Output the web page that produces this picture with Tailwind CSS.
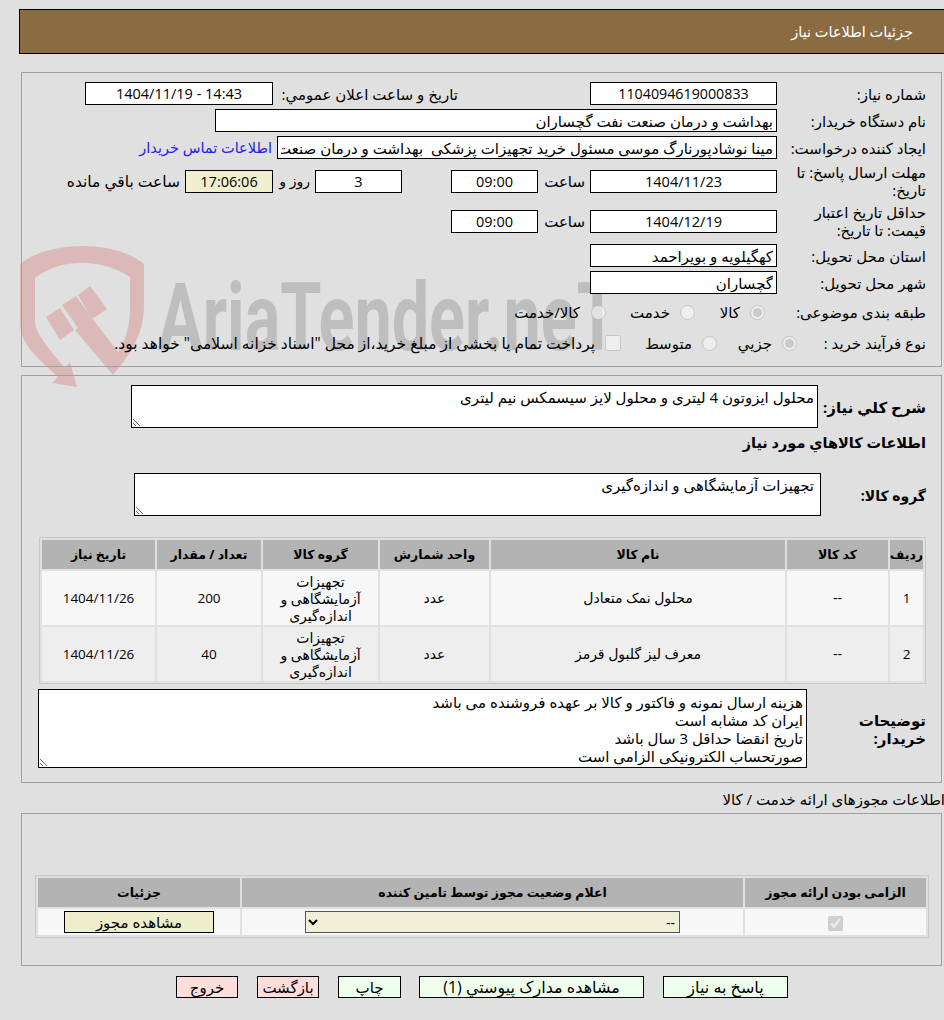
<!DOCTYPE html>
<html lang="fa" dir="rtl">
<head>
    <meta charset="UTF-8">
    <title>جزئیات اطلاعات نیاز</title>
    <script src="https://cdn.jsdelivr.net/npm/@tailwindcss/browser@4"></script>
</head>
<body class="relative bg-[#e0e0e0] text-black text-[15px] leading-[18px] font-['Open_Sans','DejaVu_Sans',sans-serif] w-[944px] h-[1020px] overflow-hidden">

    <!-- watermark -->
    <svg class="absolute left-0 top-0 pointer-events-none" width="944" height="1020" viewBox="0 0 944 1020">
        <path fill="#dbb9b9" d="M20,264 C50,240 115,240 144,264 L144,305 C144,335 130,355 113,375 L75,330 L92,318 L118,352 C126,340 130,325 130,307 L130,277 C100,258 62,258 35,278 L35,323 C36,335 52,352 65,368 L70,362 L77,387 L52,383 L58,377 C40,360 20,345 20,323 Z"/>
        <path fill="#dbb9b9" d="M46,317 L60,308 L74,330 L60,340 Z M62,305 L76,296 L92,318 L78,328 Z M78,295 L90,286 L107,309 L92,319 Z"/>
        <text x="158" y="350" font-family="Roboto" font-weight="700" font-size="94" fill="#bebebe" direction="ltr" textLength="460" lengthAdjust="spacingAndGlyphs">AriaTender.neT</text>
    </svg>

    <div class="relative">
        <!-- title bar -->
        <div class="h-[45px] ml-[19px] mt-[9px] absolute top-0 left-0 right-0 bg-[#8b6c42] border border-black border-r-0 flex items-center pr-[31px] text-white text-[14.5px]">جزئیات اطلاعات نیاز</div>

        <!-- main info -->
        <section class="absolute left-[21px] top-[72px] w-[921px] h-[295px] border border-[#a0a0a0] pt-[9px] pr-[15px]">
            <div class="flex items-center h-[23px]">
                <label class="w-[149px]">شماره نیاز:</label>
                <input readonly value="1104094619000833" class="w-[187px] h-[23px] bg-white border border-black text-center text-[14.25px] outline-none">
                <label class="w-[185px] ms-[132px]">تاریخ و ساعت اعلان عمومي:</label>
                <input readonly dir="ltr" value="1404/11/19 - 14:43" class="w-[188px] h-[23px] bg-white border border-black text-center text-[14.5px] outline-none">
            </div>
            <div class="flex items-center h-[23px] mt-[4px]">
                <label class="w-[149px]">نام دستگاه خریدار:</label>
                <input readonly value="بهداشت و درمان صنعت نفت گچساران" class="w-[562px] h-[23px] bg-white border border-black px-[3px] outline-none">
            </div>
            <div class="flex items-center h-[23px] mt-[4px]">
                <label class="w-[149px]">ایجاد کننده درخواست:</label>
                <input readonly value="مینا نوشادپورنارگ موسی مسئول خرید تجهیزات پزشکی  بهداشت و درمان صنعت نفت گچساران" class="w-[500px] h-[23px] bg-white border border-black px-[3px] outline-none">
                <a class="ms-[5px] text-[#2222ee] text-[14.5px]">اطلاعات تماس خریدار</a>
            </div>
            <div class="flex items-center h-[36px] mt-[4px]">
                <label class="w-[149px]">مهلت ارسال پاسخ: تا تاریخ:</label>
                <input readonly value="1404/11/23" class="w-[187px] h-[23px] bg-white border border-black text-center text-[14.5px] outline-none">
                <span class="w-[47px] ms-[5px]">ساعت</span>
                <input readonly value="09:00" class="w-[87px] h-[23px] bg-white border border-black text-center text-[14.5px] outline-none">
                <input readonly value="3" class="w-[87px] h-[23px] ms-[49px] bg-white border border-black text-center text-[14.5px] outline-none">
                <span class="w-[37px] ms-[5px] text-[14px]">روز و</span>
                <input readonly value="17:06:06" class="w-[88px] h-[23px] bg-[#f0f0d0] border border-black text-center text-[14.5px] outline-none">
                <span class="ms-[5px] text-[15.5px]">ساعت باقي مانده</span>
            </div>
            <div class="flex items-center h-[36px] mt-[4px]">
                <label class="w-[149px]">حداقل تاریخ اعتبار قیمت: تا تاریخ:</label>
                <input readonly value="1404/12/19" class="w-[187px] h-[23px] bg-white border border-black text-center text-[14.5px] outline-none">
                <span class="w-[47px] ms-[5px]">ساعت</span>
                <input readonly value="09:00" class="w-[87px] h-[23px] bg-white border border-black text-center text-[14.5px] outline-none">
            </div>
            <div class="flex items-center h-[23px] mt-[5px]">
                <label class="w-[149px]">استان محل تحویل:</label>
                <input readonly value="کهگیلویه و بویراحمد" class="w-[187px] h-[23px] bg-white border border-black px-[3px] outline-none">
            </div>
            <div class="flex items-center h-[23px] mt-[4px]">
                <label class="w-[149px]">شهر محل تحویل:</label>
                <input readonly value="گچساران" class="w-[187px] h-[23px] bg-white border border-black px-[3px] outline-none">
            </div>
            <div class="flex items-center h-[24px] mt-[6px]">
                <label class="w-[149px]">طبقه بندی موضوعی:</label>
                <input type="radio" disabled checked class="w-[15px] h-[15px] m-0 ms-[12px]">
                <span class="w-[45px] ms-[10px]">کالا</span>
                <input type="radio" disabled class="w-[15px] h-[15px] m-0">
                <span class="w-[64px] ms-[10px]">خدمت</span>
                <input type="radio" disabled class="w-[15px] h-[15px] m-0">
                <span class="ms-[11px]">کالا/خدمت</span>
            </div>
            <div class="flex items-center h-[24px] mt-[7px]">
                <label class="w-[129px]">نوع فرآیند خرید :</label>
                <input type="radio" disabled checked class="w-[15px] h-[15px] m-0">
                <span class="w-[55px] ms-[10px]">جزیي</span>
                <input type="radio" disabled class="w-[15px] h-[15px] m-0">
                <span class="w-[71px] ms-[10px]">متوسط</span>
                <input type="checkbox" disabled class="w-[16px] h-[16px] m-0">
                <span class="ms-[10px] text-[15.5px]">پرداخت تمام یا بخشی از مبلغ خرید،از محل "اسناد خزانه اسلامی" خواهد بود.</span>
            </div>
        </section>

        <!-- description and items -->
        <section class="absolute left-[21px] top-[375px] w-[921px] h-[408px] border border-[#a0a0a0] pr-[15px]">
            <div class="flex items-start pt-[9px]">
                <label class="w-[108px] font-bold mt-[13px]">شرح کلي نیاز:</label>
                <textarea readonly class="block w-[687px] h-[43px] bg-white border border-black px-[3px] pt-[2px] outline-none">محلول ایزوتون 4 لیتری و محلول لایز سیسمکس نیم لیتری</textarea>
            </div>
            <div class="font-bold text-[14.5px] mt-[6px] h-[18px]">اطلاعات کالاهاي مورد نیاز</div>
            <div class="flex items-start mt-[21px]">
                <label class="w-[105px] font-bold text-[14px] mt-[14px]">گروه کالا:</label>
                <textarea readonly class="block w-[687px] h-[43px] bg-white border border-black px-[6px] pt-[2px] outline-none">تجهیزات آزمایشگاهی و اندازه‌گیری</textarea>
            </div>
            <table class="mt-[21px] w-[887px] table-fixed border border-[#c8c8c8] border-separate border-spacing-[2px] text-center text-[14px]">
                <thead>
                    <tr class="h-[29px] bg-[#b3b3b3] text-[12.5px]">
                        <th class="w-[33px] p-0">ردیف</th>
                        <th class="w-[101px] p-0">کد کالا</th>
                        <th class="w-[294px] p-0">نام کالا</th>
                        <th class="w-[109px] p-0">واحد شمارش</th>
                        <th class="w-[115px] p-0">گروه کالا</th>
                        <th class="w-[104px] p-0">تعداد / مقدار</th>
                        <th class="p-0">تاریخ نیاز</th>
                    </tr>
                </thead>
                <tbody>
                    <tr class="h-[54px] bg-[#f7f7f7]">
                        <td class="p-0 text-[13.5px]">1</td>
                        <td class="p-0">--</td>
                        <td class="p-0">محلول نمک متعادل</td>
                        <td class="p-0">عدد</td>
                        <td class="p-0 leading-[17px]">تجهیزات آزمایشگاهی و اندازه‌گیری</td>
                        <td class="p-0 text-[13.5px]">200</td>
                        <td class="p-0 text-[13.5px]">1404/11/26</td>
                    </tr>
                    <tr class="h-[54px] bg-[#eeeeee]">
                        <td class="p-0 text-[13.5px]">2</td>
                        <td class="p-0">--</td>
                        <td class="p-0">معرف لیز گلبول قرمز</td>
                        <td class="p-0">عدد</td>
                        <td class="p-0 leading-[17px]">تجهیزات آزمایشگاهی و اندازه‌گیری</td>
                        <td class="p-0 text-[13.5px]">40</td>
                        <td class="p-0 text-[13.5px]">1404/11/26</td>
                    </tr>
                </tbody>
            </table>
            <div class="flex items-center mt-[5px]">
                <label class="w-[119px] pl-[30px] font-bold">توضیحات خریدار:</label>
                <textarea readonly class="block w-[769px] h-[79px] bg-white border border-black px-[3px] pt-[3px] outline-none overflow-hidden">هزینه ارسال نمونه و فاکتور و کالا بر عهده فروشنده می باشد
ایران کد مشابه است
تاریخ انقضا حداقل 3 سال باشد
صورتحساب الکترونیکی الزامی است</textarea>
            </div>
        </section>

        <div class="absolute right-[-1px] top-[790px] h-[18px]">اطلاعات مجوزهای ارائه خدمت / کالا</div>

        <!-- permits -->
        <section class="absolute left-[21px] top-[813px] w-[921px] h-[153px] border border-[#a0a0a0] pt-[61px] pr-[12px]">
            <table class="w-[894px] table-fixed border border-[#c8c8c8] border-separate border-spacing-[2px] text-center text-[14px]">
                <thead>
                    <tr class="h-[29px] bg-[#b3b3b3] text-[12.5px]">
                        <th class="w-[181px] p-0">الزامی بودن ارائه مجوز</th>
                        <th class="w-[501px] p-0">اعلام وضعیت مجوز توسط تامین کننده</th>
                        <th class="p-0">جزئیات</th>
                    </tr>
                </thead>
                <tbody>
                    <tr class="h-[26px] bg-[#f7f7f7]">
                        <td class="p-0"><input type="checkbox" disabled checked class="w-[15px] h-[15px] m-0 align-middle"></td>
                        <td class="p-0">
                            <select class="block mr-[63px] w-[375px] h-[22px] bg-[#f0f0d8] border border-[#555555] outline-none"><option>--</option></select>
                        </td>
                        <td class="p-0">
                            <button class="block mr-[26px] w-[150px] h-[22px] bg-[#eeeecc] border border-black text-[15px]">مشاهده مجوز</button>
                        </td>
                    </tr>
                </tbody>
            </table>
        </section>

        <!-- actions -->
        <div class="absolute top-[976px] right-[156px] flex gap-[19px]">
            <button class="w-[125px] h-[22px] bg-[#eeffee] border border-black text-[16px]">پاسخ به نیاز</button>
            <button class="w-[225px] h-[22px] bg-[#eeffee] border border-black text-[16px]">مشاهده مدارک پیوستي (1)</button>
            <button class="w-[63px] h-[22px] -ms-[1px] bg-[#eeffee] border border-black">چاپ</button>
            <button class="w-[62px] h-[22px] bg-[#ffdddd] border border-black">بازگشت</button>
            <button class="w-[62px] h-[22px] bg-[#ffdddd] border border-black">خروج</button>
        </div>
    </div>
</body>
</html>
